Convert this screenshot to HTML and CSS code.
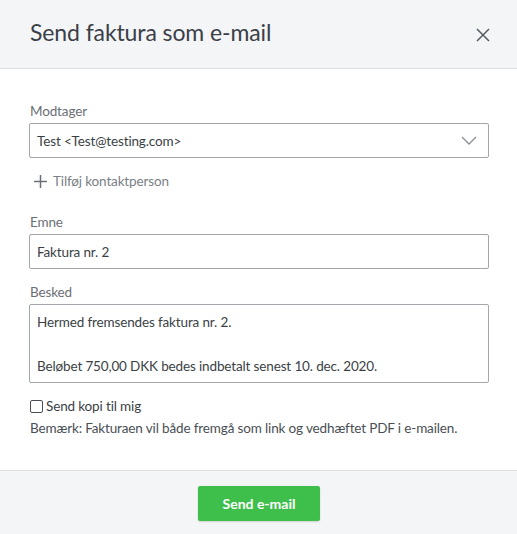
FILE: index.html
```html
<!DOCTYPE html>
<html lang="da">
<head>
<meta charset="utf-8">
<title>Send faktura som e-mail</title>
<link rel="stylesheet" href="styles.css">
</head>
<body>
<div class="modal">
  <header class="modal-header">
    <h1 class="modal-title">Send faktura som e-mail</h1>
    <button class="close-btn" aria-label="Luk">
      <svg width="14" height="14" viewBox="0 0 14 14"><path d="M1 1L13 13M13 1L1 13" stroke="#555b62" stroke-width="1.5" fill="none"/></svg>
    </button>
  </header>
  <div class="modal-body">
    <div class="field">
      <label class="label">Modtager</label>
      <div class="control select">
        <span>Test &lt;Test@testing.com&gt;</span>
        <svg class="chevron" width="16" height="9" viewBox="0 0 16 9"><path d="M1 1L8 8L15 1" stroke="#8a8f95" stroke-width="1.3" fill="none"/></svg>
      </div>
    </div>
    <div class="add-contact">
      <svg width="13" height="13" viewBox="0 0 13 13"><path d="M6.5 0V13M0 6.5H13" stroke="#6b7077" stroke-width="1.5"/></svg>
      <span>Tilføj kontaktperson</span>
    </div>
    <div class="field field-gap">
      <label class="label">Emne</label>
      <div class="control input">Faktura nr. 2</div>
    </div>
    <div class="field field-gap2">
      <label class="label">Besked</label>
      <div class="control textarea">
        <div>Hermed fremsendes faktura nr. 2.</div>
        <div>&nbsp;</div>
        <div>Beløbet 750,00 DKK bedes indbetalt senest 10. dec. 2020.</div>
      </div>
    </div>
    <label class="check-row"><span class="checkbox"></span>Send kopi til mig</label>
    <p class="note">Bemærk: Fakturaen vil både fremgå som link og vedhæftet PDF i e-mailen.</p>
  </div>
  <footer class="modal-footer">
    <button class="send-btn">Send e-mail</button>
  </footer>
</div>
</body>
</html>
```
FILE: styles.css
```css
* { box-sizing: border-box; }
html, body { margin: 0; padding: 0; background: #fff; }
body {
  font-family: "Lato", "Source Sans Pro", "Noto Sans", sans-serif;
  font-size: 13.5px;
  letter-spacing: -0.14px;
  color: #3a3f45;
  width: 517px;
  height: 534px;
  overflow: hidden;
}
.modal { display: flex; flex-direction: column; height: 534px; }
.modal-header {
  height: 69px;
  background: #f4f5f7;
  border-bottom: 1px solid #dcdee1;
  display: flex;
  align-items: center;
  justify-content: space-between;
  padding: 0 27px 0 30px;
}
.modal-title {
  margin: 0;
  font-weight: 400;
  font-size: 23px;
  color: #3b4047;
  letter-spacing: -0.1px;
  padding-bottom: 4px;
}
.close-btn {
  background: none; border: 0; padding: 0; width: 14px; height: 14px;
  display: flex; margin-top: 1px;
}
.modal-body {
  flex: 1;
  padding: 32px 28px 0 29px;
}
.field { display: flex; flex-direction: column; }
.label {
  line-height: 20px;
  color: #6b6f75;
  margin: 0 0 2px 1px;
}
.control {
  border: 1px solid #a3a6aa;
  border-radius: 2px;
  background: #fff;
  color: #3a3f45;
}
.select, .input {
  height: 35px;
  display: flex;
  align-items: center;
  padding: 0 10px 0 7px;
}
.select { justify-content: space-between; }
.chevron { margin-right: 1px; }
.add-contact {
  display: flex;
  align-items: center;
  gap: 6px;
  height: 20px;
  margin-top: 13px;
  padding-left: 5px;
  color: #7a7f86;
}
.field-gap { margin-top: 21px; }
.field-gap2 { margin-top: 13px; }
.textarea {
  height: 79px;
  padding: 6px 7px;
  line-height: 22px;
}
.check-row {
  display: flex;
  align-items: center;
  height: 20px;
  margin-top: 13px;
  color: #3a3f45;
  padding-left: 1px;
}
.checkbox {
  width: 13px; height: 13px;
  border: 1px solid #4a4f55;
  border-radius: 2px;
  margin-right: 3px;
  background: #fff;
}
.note {
  margin: 2px 0 0 1px;
  line-height: 20px;
  color: #4a4f55;
}
.modal-footer {
  height: 64px;
  background: #f4f5f7;
  border-top: 1px solid #dcdee1;
  display: flex;
  justify-content: center;
  align-items: flex-start;
  padding-top: 15px;
  padding-left: 1px;
}
.send-btn {
  width: 122px;
  height: 35px;
  background: #3ebf4b;
  color: #fff;
  border: 0;
  border-radius: 2px;
  font-family: inherit;
  font-size: 14px;
  font-weight: 700;
  letter-spacing: 0;
  box-shadow: 0 1px 2px rgba(0,0,0,0.15);
}
```
